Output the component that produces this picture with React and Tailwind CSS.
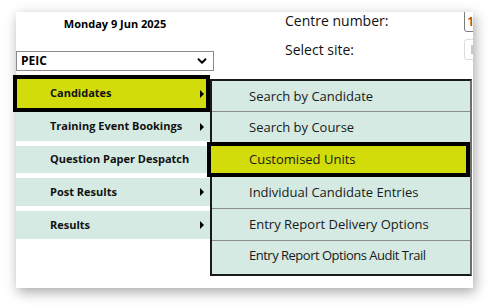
import React from "react";
import { ChevronDown } from "lucide-react";

const leftItems = [
  { label: "Training Event Bookings", arrow: true, h: "h-[29px]" },
  { label: "Question Paper Despatch", arrow: false, h: "h-[27px] mt-[5px]" },
  { label: "Post Results", arrow: true, h: "h-[28px] mt-[5px]" },
  { label: "Results", arrow: true, h: "h-[28px] mt-[5px]" },
];

const Arrow = () => (
  <span className="absolute right-[6px] top-1/2 -translate-y-1/2 border-y-[4px] border-y-transparent border-l-[4px] border-l-black" />
);

const App = () => {
  return (
    <div
      className="w-[491px] h-[306px] bg-white pl-[16px] pt-[12px]"
      style={{ fontFamily: "'Open Sans', 'Noto Sans', sans-serif" }}
    >
      <div className="relative w-[457px] h-[276px] bg-white shadow-[2px_4px_12px_rgba(0,0,0,0.35)]">
        {/* header */}
        <div className="flex h-[63px] overflow-hidden">
          <div className="w-[198px] shrink-0 flex flex-col">
            <div className="h-[39px] pt-[4px] text-center text-[11px] font-bold text-black">
              Monday 9 Jun 2025
            </div>
            <div className="h-[20px] border border-[#8a8a8a] flex items-center justify-between pl-[4px] pr-[4px]">
              <span className="text-[12px] font-bold text-black leading-none">PEIC</span>
              <ChevronDown size={14} strokeWidth={3.2} className="text-black" />
            </div>
          </div>
          <div className="ml-[71px] shrink-0 flex flex-col">
            <div className="h-[25px] flex items-start">
              <span className="text-[14px] text-[#111] leading-[18px] w-[179px] shrink-0">
                Centre number:
              </span>
              <div className="-mt-[2px] h-[22px] w-[40px] shrink-0 border border-[#7a7a7a] rounded-[3px] pl-[2px] text-[13px] font-semibold text-[#b34700] leading-[20px]">
                1
              </div>
            </div>
            <div className="h-[25px] flex items-center">
              <span className="text-[14px] text-[#111] w-[179px] shrink-0">Select site:</span>
              <div className="h-[21px] w-[40px] shrink-0 border border-[#dcdcdc] rounded-[3px] flex items-center pl-[6px]">
                <span className="w-[2px] h-[9px] bg-[#c8c8c8]" />
              </div>
            </div>
          </div>
        </div>

        {/* left menu */}
        <div className="w-[194px] flex flex-col text-[11px] font-bold text-[#111]">
          <div className="relative -ml-[3px] w-[197px] h-[37px] border-4 border-black bg-[#d2dc0b] flex items-center pl-[33px]">
            Candidates
            <span className="absolute right-[2px] top-1/2 -translate-y-1/2 border-y-[4px] border-y-transparent border-l-[4px] border-l-black" />
          </div>
          {leftItems.map((it) => (
            <div
              key={it.label}
              className={`relative ${it.h} bg-[#d4eae3] flex items-center pl-[34px]`}
            >
              {it.label}
              {it.arrow && <Arrow />}
            </div>
          ))}
        </div>

        {/* flyout submenu */}
        <div className="absolute left-[194px] top-[67px] w-[262px] h-[197px] border-2 border-[#1a1a1a] border-r-[#6e6e6e] bg-[#d4eae3] flex flex-col text-[13px] text-[#1a1a1a]">
          <div className="h-[31px] border-b border-[#8c8c8c] flex items-center pl-[37px] pt-[2px]">
            Search by Candidate
          </div>
          <div className="h-[30px] flex items-center pl-[37px] pt-[1px]">Search by Course</div>
          <div className="-ml-[5px] h-[35px] border-4 border-black bg-[#d2dc0b] flex items-center pl-[38px]">
            Customised Units
          </div>
          <div className="h-[32px] border-b border-[#8c8c8c] flex items-center pl-[37px]">
            Individual Candidate Entries
          </div>
          <div className="h-[32px] border-b border-[#8c8c8c] flex items-center pl-[37px]">
            Entry Report Delivery Options
          </div>
          <div className="h-[30px] flex items-center pl-[37px] tracking-[-0.5px]">
            Entry Report Options Audit Trail
          </div>
        </div>
      </div>
    </div>
  );
};

export default App;
